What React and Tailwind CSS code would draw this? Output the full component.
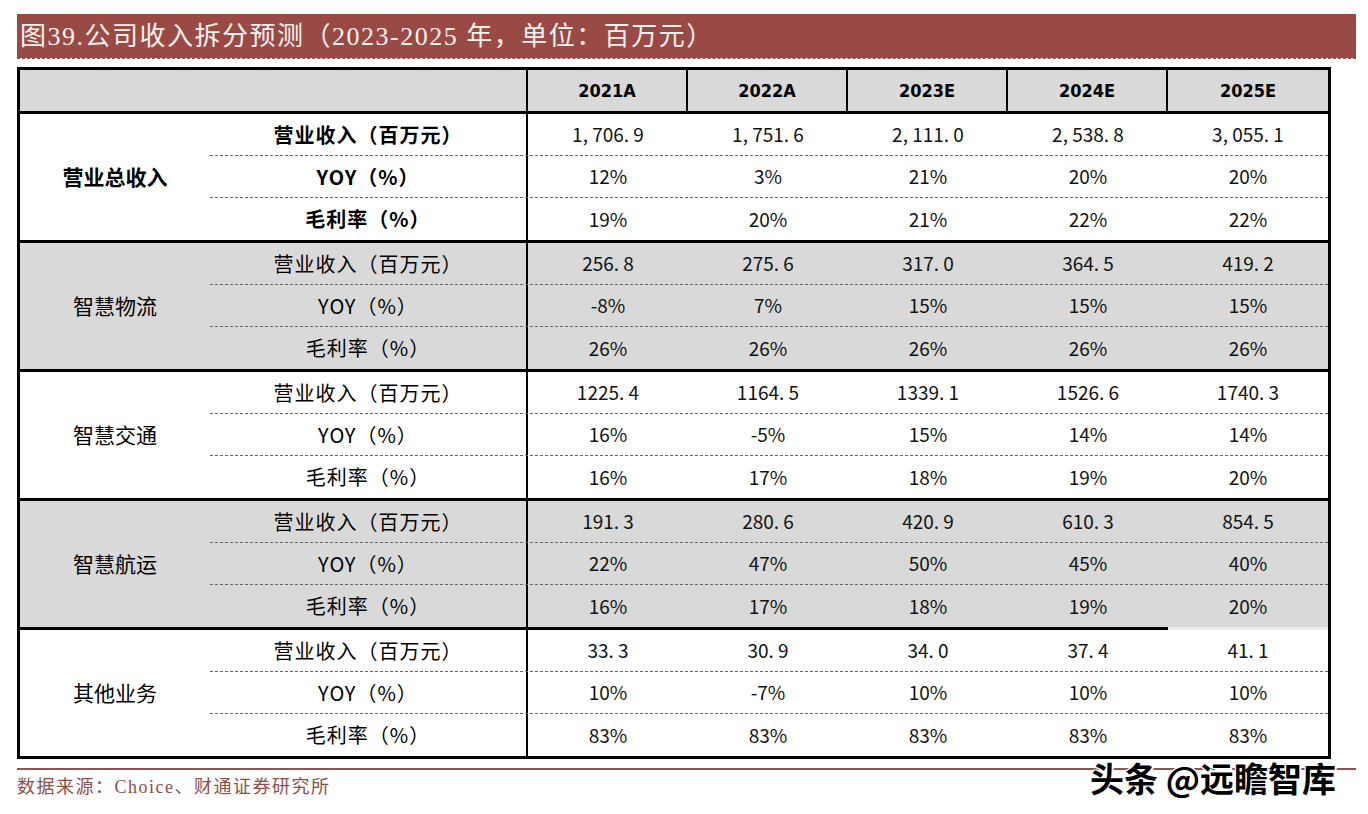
import React from "react";

const years = ["2021A", "2022A", "2023E", "2024E", "2025E"];

const groups = [
  {
    name: "营业总收入",
    bold: true,
    bg: "bg-white",
    rows: [
      ["营业收入（百万元）", ["1, 706. 9", "1, 751. 6", "2, 111. 0", "2, 538. 8", "3, 055. 1"]],
      ["YOY（%）", ["12%", "3%", "21%", "20%", "20%"]],
      ["毛利率（%）", ["19%", "20%", "21%", "22%", "22%"]],
    ],
  },
  {
    name: "智慧物流",
    bg: "bg-[#d9d9d9]",
    rows: [
      ["营业收入（百万元）", ["256. 8", "275. 6", "317. 0", "364. 5", "419. 2"]],
      ["YOY（%）", ["-8%", "7%", "15%", "15%", "15%"]],
      ["毛利率（%）", ["26%", "26%", "26%", "26%", "26%"]],
    ],
  },
  {
    name: "智慧交通",
    bg: "bg-white",
    rows: [
      ["营业收入（百万元）", ["1225. 4", "1164. 5", "1339. 1", "1526. 6", "1740. 3"]],
      ["YOY（%）", ["16%", "-5%", "15%", "14%", "14%"]],
      ["毛利率（%）", ["16%", "17%", "18%", "19%", "20%"]],
    ],
  },
  {
    name: "智慧航运",
    bg: "bg-[#d9d9d9]",
    special: true,
    rows: [
      ["营业收入（百万元）", ["191. 3", "280. 6", "420. 9", "610. 3", "854. 5"]],
      ["YOY（%）", ["22%", "47%", "50%", "45%", "40%"]],
      ["毛利率（%）", ["16%", "17%", "18%", "19%", "20%"]],
    ],
  },
  {
    name: "其他业务",
    bg: "bg-white",
    last: true,
    rows: [
      ["营业收入（百万元）", ["33. 3", "30. 9", "34. 0", "37. 4", "41. 1"]],
      ["YOY（%）", ["10%", "-7%", "10%", "10%", "10%"]],
      ["毛利率（%）", ["83%", "83%", "83%", "83%", "83%"]],
    ],
  },
];

const cjk = "font-['Noto_Sans_CJK_SC','Noto_Sans',sans-serif]";

function Group({ g }) {
  return (
    <>
      <div className={`flex ${g.bg}`}>
        <div
          className={`w-[190px] flex items-center justify-center text-[21px] text-black ${cjk} ${
            g.bold ? "font-bold" : ""
          }`}
        >
          {g.name}
        </div>
        <div className="flex flex-col">
          {g.rows.map(([label, vals], i) => (
            <div
              key={i}
              className={`flex h-[42px] ${
                i < 2 ? "border-b border-dashed border-[#666]" : ""
              }`}
            >
              <div
                className={`w-[318px] border-r-2 border-black flex items-center justify-center text-[20px] tracking-[1px] text-black ${cjk} ${
                  g.bold ? "font-bold" : ""
                }`}
              >
                {label}
              </div>
              {vals.map((v, j) => (
                <div
                  key={j}
                  className={`w-[160px] flex items-center justify-center text-[19px] text-[#111] ${cjk}`}
                >
                  {v}
                </div>
              ))}
            </div>
          ))}
        </div>
      </div>
      {!g.last &&
        (g.special ? (
          <div className="flex h-[3px]">
            <div className="w-[1148px] bg-black" />
            <div className="flex-1 bg-[#ececec]" />
          </div>
        ) : (
          <div className="h-[3px] bg-black" />
        ))}
    </>
  );
}

export default function App() {
  return (
    <div className="w-[1368px] h-[814px] bg-white relative overflow-hidden">
      <div className="pt-[14px] pl-[17px] w-[1356px]">
        <div className="h-[44px] bg-[#9a4a45] flex items-center pl-[3px]">
          <span className="text-[26px] text-[#fbf3f2] font-['Liberation_Serif','Noto_Sans_CJK_SC',serif] tracking-[1.5px]">
            图39.公司收入拆分预测（2023-2025 年，单位：百万元）
          </span>
        </div>
        <div className="border-t border-dashed border-[#8a5550]" />

        <div className="mt-[8px] w-[1314px] border-[3px] border-black">
          <div className="flex h-[41px] bg-[#d9d9d9]">
            <div className="w-[508px] border-r-2 border-black" />
            {years.map((y, i) => (
              <div
                key={y}
                className={`w-[160px] flex items-center justify-center text-[18px] font-bold text-black font-['Liberation_Sans_Narrow','DejaVu_Sans_Condensed','Liberation_Sans',sans-serif] ${
                  i < 4 ? "border-r-2 border-black" : ""
                }`}
              >
                {y}
              </div>
            ))}
          </div>
          <div className="h-[3px] bg-black" />
          {groups.map((g) => (
            <Group key={g.name} g={g} />
          ))}
        </div>

        <div className="mt-[9px] h-[2px] bg-[#8b5651]" />
        <div className="mt-[4px] text-[18px] text-[#8b4f4a] font-['Liberation_Serif','Noto_Sans_CJK_SC',serif] tracking-[1.5px]">
          数据来源：Choice、财通证券研究所
        </div>
      </div>

      <div
        className={`absolute left-[1090px] top-[752px] text-[34px] font-bold text-black ${cjk} [text-shadow:1px_1px_0_#fff,-1px_-1px_0_#fff,1px_-1px_0_#fff,-1px_1px_0_#fff,2px_2px_0_#fff]`}
      >
        头条 @远瞻智库
      </div>
    </div>
  );
}
